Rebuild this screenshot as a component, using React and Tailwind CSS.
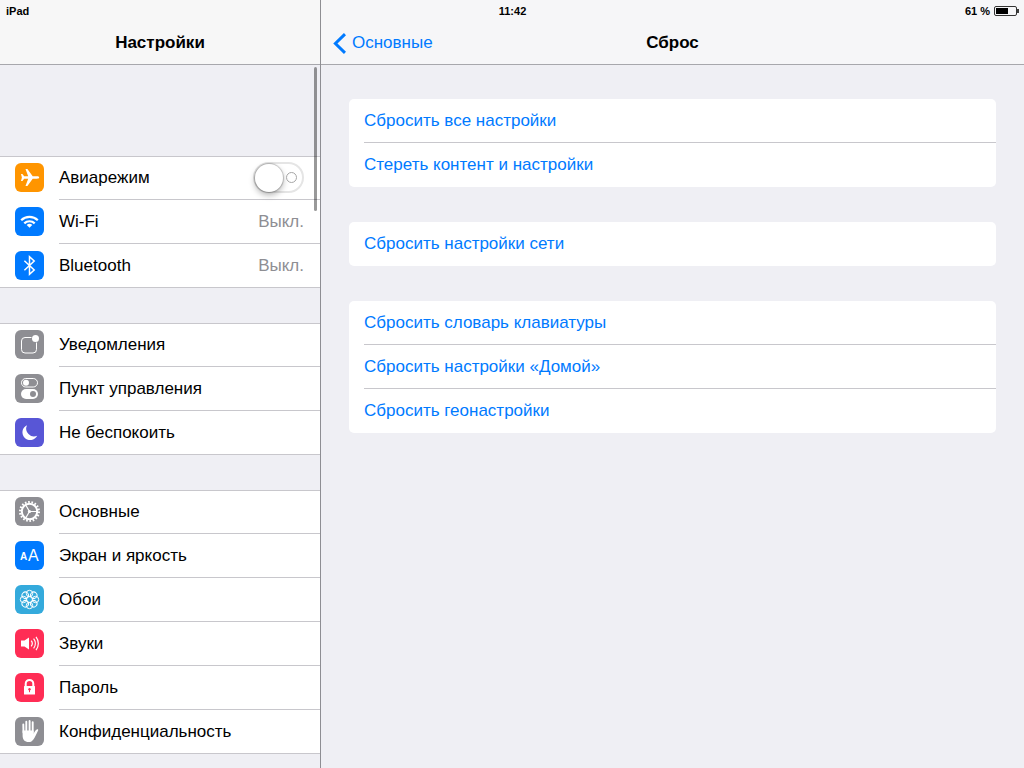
const Airplane = () => (
  <path
    fill="#fff"
    d="M24.200 14.500c0-.8-1-1.200-2.200-1.200h-4.300L12.400 6h-1.900l2.700 7.300H9.200L7.400 11H6l.9 3.500L6 18h1.400l1.800-2.300h4l-2.700 7.300h1.900l5.300-7.300H22c1.200 0 2.200-.4 2.200-1.200Z"
  />
);

const Wifi = () => (
  <g fill="none" stroke="#fff" strokeWidth="2.200">
    <path d="M6.200 13.200a11.800 11.800 0 0 1 16.600 0" />
    <path d="M9.300 16.400a7.400 7.400 0 0 1 10.400 0" />
    <path d="M14.500 20.800l-2.800-2.900a3.900 3.900 0 0 1 5.600 0Z" fill="#fff" stroke="none" />
  </g>
);

const Bluetooth = () => (
  <path
    fill="none"
    stroke="#fff"
    strokeWidth="1.500"
    d="M9.400 9.800l9.800 9.200-4.700 4.300V5.700l4.700 4.300-9.800 9.200"
  />
);

const Notifications = () => (
  <g>
    <path
      fill="none"
      stroke="#fff"
      d="M16.500 7.500H10A3.500 3.500 0 0 0 6.500 11v8.500A3.500 3.500 0 0 0 10 23h8a3.500 3.500 0 0 0 3.500-3.500V12.500"
    />
    <circle cx="20.500" cy="8.500" r="3.500" fill="#fff" />
  </g>
);

const ControlCenter = () => (
  <g>
    <rect x="6.500" y="4.500" width="16" height="8.500" rx="4.250" fill="none" stroke="#fff" />
    <circle cx="11" cy="8.800" r="3" fill="#fff" />
    <rect x="6" y="15" width="17" height="10" rx="5" fill="#fff" />
    <circle cx="18" cy="20" r="3" fill="#8e8e93" />
  </g>
);

const Moon = () => (
  <path
    fill="#fff"
    d="M12 7.200a7.800 7.800 0 1 0 10.200 10.600A7.900 7.900 0 0 1 12 7.200Z"
  />
);

const Gear = () => (
  <g fill="none" stroke="#fff">
    <circle cx="14.500" cy="14.500" r="9.400" strokeWidth="2.200" strokeDasharray="1.640 1.640" />
    <circle cx="14.500" cy="14.500" r="7.700" strokeWidth="2" />
    <circle cx="14.500" cy="14.500" r="1.600" fill="#fff" stroke="none" />
    <path d="M14.500 14.500h7.500M14.500 14.500l-3.800-6.500M14.500 14.500l-3.800 6.500" strokeWidth="1.200" />
  </g>
);

const Display = () => (
  <g fill="#fff" className="font-['Liberation_Sans',Arial,sans-serif]">
    <text x="5" y="19" fontSize="10" fontWeight="700">A</text>
    <text x="13" y="20" fontSize="16">A</text>
  </g>
);

const petals = [0, 45, 90, 135, 180, 225, 270, 315];

const Wallpaper = () => (
  <g fill="none" stroke="#fff">
    {petals.map((angle) => (
      <circle key={angle} cx="14.500" cy="8.500" r="3.200" transform={`rotate(${angle} 14.5 14.5)`} />
    ))}
    <circle cx="14.500" cy="14.500" r="3" />
  </g>
);

const Sound = () => (
  <g>
    <path fill="#fff" d="M6 11.500h3.500L14 8.500v12l-4.500-3H6Z" />
    <g fill="none" stroke="#fff" strokeWidth="1.200">
      <path d="M16.200 11.700a4.500 4.500 0 0 1 0 5.600" />
      <path d="M18.600 9.700a7.600 7.600 0 0 1 0 9.600" />
      <path d="M21 7.800a10.800 10.800 0 0 1 0 13.400" />
    </g>
  </g>
);

const Lock = () => (
  <g>
    <path fill="none" stroke="#fff" strokeWidth="2" d="M10.700 14v-3.300a3.800 3.800 0 0 1 7.600 0V14" />
    <rect x="9" y="13" width="11" height="8.500" rx="0.500" fill="#fff" />
    <circle cx="14.500" cy="16.300" r="1.200" fill="#ff2d55" />
    <path d="M14.500 16.500v2.700" stroke="#ff2d55" />
  </g>
);

const Hand = () => (
  <g fill="none" stroke="#fff" strokeLinecap="round">
    <path strokeWidth="1.900" d="M8.300 7.500l.2 8M11.300 4.800v10M14.600 4v11M17.700 5.300v10" />
    <path
      fill="#fff"
      stroke="none"
      d="M7.600 13.500h11v3.200c1-2.300 2.100-3.700 3.200-4.300.9-.5 1.700.2 1.300 1-1.700 3.400-2.800 6.500-4.700 9-1.200 1.700-2.500 2.600-4.800 2.600-3.900 0-5.800-2.300-6-6Z"
    />
  </g>
);

const groups = [
  [
    { label: 'Авиарежим', color: 'bg-[#ff9500]', icon: Airplane, toggle: true },
    { label: 'Wi-Fi', color: 'bg-[#007aff]', icon: Wifi, value: 'Выкл.' },
    { label: 'Bluetooth', color: 'bg-[#007aff]', icon: Bluetooth, value: 'Выкл.' },
  ],
  [
    { label: 'Уведомления', color: 'bg-[#8e8e93]', icon: Notifications },
    { label: 'Пункт управления', color: 'bg-[#8e8e93]', icon: ControlCenter },
    { label: 'Не беспокоить', color: 'bg-[#5856d6]', icon: Moon },
  ],
  [
    { label: 'Основные', color: 'bg-[#8e8e93]', icon: Gear },
    { label: 'Экран и яркость', color: 'bg-[#007aff]', icon: Display },
    { label: 'Обои', color: 'bg-[#34aadc]', icon: Wallpaper },
    { label: 'Звуки', color: 'bg-[#ff2d55]', icon: Sound },
    { label: 'Пароль', color: 'bg-[#ff2d55]', icon: Lock },
    { label: 'Конфиденциальность', color: 'bg-[#8e8e93]', icon: Hand },
  ],
];

const resetGroups = [
  ['Сбросить все настройки', 'Стереть контент и настройки'],
  ['Сбросить настройки сети'],
  ['Сбросить словарь клавиатуры', 'Сбросить настройки «Домой»', 'Сбросить геонастройки'],
];

const Toggle = ({ id }) => (
  <span className="relative flex items-center">
    <input
      id={id}
      type="checkbox"
      role="switch"
      className="h-[31px] w-[51px] appearance-none rounded-full border-2 border-[#e5e5e5] bg-white"
    />
    <span className="pointer-events-none absolute left-0.5 size-7 rounded-full bg-white shadow-[0_0_1px_1px_rgba(0,0,0,0.2),0_3px_6px_rgba(0,0,0,0.3)]" />
    <span className="pointer-events-none absolute right-[7px] size-[11px] rounded-full border border-[#a6a6a6]" />
  </span>
);

const SettingsRow = ({ item }) => {
  const Icon = item.icon;
  const content = (
    <>
      <span className={`mb-px flex shrink-0 rounded-md ${item.color}`}>
        <svg viewBox="0 0 29 29" className="size-[29px]" aria-hidden="true">
          <Icon />
        </svg>
      </span>
      <span className="flex h-11 flex-1 items-center justify-between border-b border-[#c8c7cc] pr-4 group-last:border-transparent">
        <span>{item.label}</span>
        {item.value && <span className="text-[#8e8e93]">{item.value}</span>}
        {item.toggle && <Toggle id="airplane" />}
      </span>
    </>
  );
  const rowClass = 'flex h-11 w-full items-center gap-[15px] pl-[15px] text-left';

  return (
    <li className="group">
      {item.toggle ? (
        <label htmlFor="airplane" className={rowClass}>{content}</label>
      ) : (
        <button type="button" className={rowClass}>{content}</button>
      )}
    </li>
  );
};

const StatusBar = () => (
  <div className="absolute inset-x-0 top-0 grid h-[22px] grid-cols-3 items-center pl-1.5 pr-[5px] text-[11px] font-bold">
    <span>iPad</span>
    <span className="text-center">11:42</span>
    <span className="flex items-center justify-end gap-1">
      61 %
      <svg viewBox="0 0 25 10" className="h-[10px] w-[25px]" aria-hidden="true">
        <rect x="0.500" y="0.500" width="22" height="9" rx="1.500" fill="none" stroke="#333" />
        <rect x="2" y="2" width="12" height="6" fill="#000" />
        <path d="M24 3v4" stroke="#000" strokeWidth="1.500" />
      </svg>
    </span>
  </div>
);

const Sidebar = () => (
  <aside className="relative w-[321px] shrink-0 border-r border-[#8e8e93]">
    <header className="flex h-[65px] items-center justify-center border-b border-[#a7a7ac] bg-[#f7f7f7] pt-[22px]">
      <h1 className="font-bold">Настройки</h1>
    </header>
    <nav className="flex flex-col gap-[35px] pt-[91px]">
      {groups.map((items) => (
        <ul
          key={items[0].label}
          className="bg-white shadow-[inset_0_1px_#c8c7cc,inset_0_-1px_#c8c7cc]"
        >
          {items.map((item) => (
            <SettingsRow key={item.label} item={item} />
          ))}
        </ul>
      ))}
    </nav>
    <div className="absolute right-[3px] top-[67px] h-36 w-[3px] rounded-full bg-black/40" />
  </aside>
);

const ResetPanel = () => (
  <main className="flex-1">
    <header className="grid h-[65px] grid-cols-3 items-center border-b border-[#a7a7ac] bg-[#f6f6f8] px-3 pt-[22px]">
      <a href="#general" className="flex items-center gap-1.5 text-[#007aff]">
        <svg viewBox="0 0 13 21" className="h-[21px] w-[13px]" aria-hidden="true">
          <path d="M12 1.200L2.400 10.500 12 19.800" fill="none" stroke="#007aff" strokeWidth="3" />
        </svg>
        Основные
      </a>
      <h2 className="text-center font-bold">Сброс</h2>
    </header>
    <div className="flex flex-col gap-[35px] px-7 pt-[34px]">
      {resetGroups.map((labels) => (
        <ul key={labels[0]} className="rounded-[5px] bg-white pl-[15px]">
          {labels.map((label) => (
            <li key={label} className="h-11 border-b border-[#c8c7cc] last:border-transparent">
              <button type="button" className="h-full w-full text-left text-[#007aff]">
                {label}
              </button>
            </li>
          ))}
        </ul>
      ))}
    </div>
  </main>
);

export default function App() {
  return (
    <div className="relative flex min-h-screen bg-[#efeff4] font-['Liberation_Sans',Arial,sans-serif] text-[17px] leading-5 text-black">
      <Sidebar />
      <ResetPanel />
      <StatusBar />
    </div>
  );
}
